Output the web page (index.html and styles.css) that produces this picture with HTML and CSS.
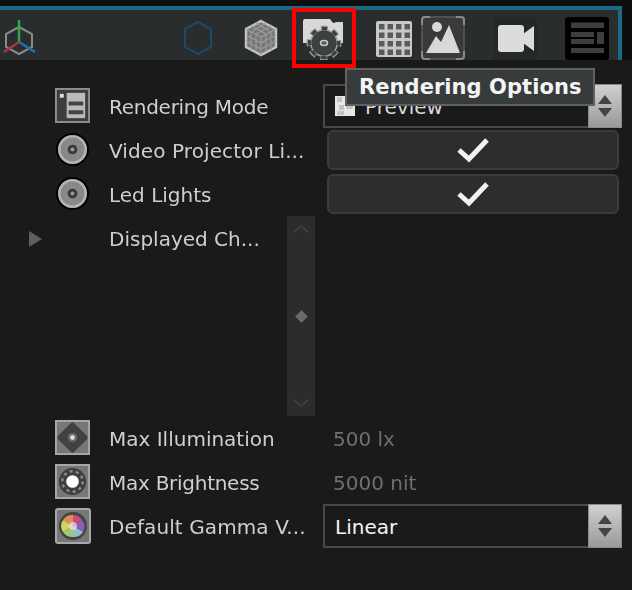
FILE: index.html
```html
<!DOCTYPE html>
<html lang="en">
<head>
<meta charset="utf-8">
<title>Rendering Options</title>
<link rel="stylesheet" href="styles.css">
</head>
<body>
<div class="app">
  <div class="panel-frame">
    <header class="toolbar">
      <svg class="tool tool-axis" viewBox="0 0 36 50" width="36" height="50"><path d="M18 17 31 24V37L18 44 5 37V24Z" fill="none" stroke="#8a8a8a" stroke-width="2"/><path d="M18 32V10" stroke="#2fa84a" stroke-width="2.5"/><path d="M18 32 3 42" stroke="#b5303f" stroke-width="2.5"/><path d="M18 32 34 42" stroke="#2273ad" stroke-width="2.5"/></svg>
      <svg class="tool tool-hex" viewBox="0 0 32 50" width="32" height="50"><path d="M16 12 29 19V37L16 44 3 37V19Z" fill="none" stroke="#1d4a69" stroke-width="2"/></svg>
      <svg class="tool tool-cube" viewBox="0 -9 36 50" width="36" height="50"><path d="M18 2 33 10V28L18 36 3 28V10Z" fill="#777" stroke="#c4c4c4" stroke-width="2.5"/><path d="M3 10 18 18 33 10M18 18V36M8 13V31M13 15V33M23 15V33M28 13V31M3 16 18 24 33 16M3 22 18 30 33 22M8 7 23 15M13 4 28 13M28 7 13 15M23 4 8 13" fill="none" stroke="#9a9a9a" stroke-width="1.2"/></svg>
      <svg class="tool tool-gear" viewBox="0 0 40 50" width="40" height="50">
        <path d="M0 11Q0 9 2 9H27L30 13 34 12H40V33H0Z" fill="#d8d8d8"/>
        <circle cx="21" cy="33" r="14" fill="#a0a0a0"/>
        <circle cx="21" cy="33" r="15.500" fill="none" stroke="#a0a0a0" stroke-width="4" stroke-dasharray="7 5.170" stroke-dashoffset="3.500"/>
        <circle cx="21" cy="33" r="12.500" fill="#3c4040"/>
        <circle cx="21" cy="33" r="14.500" fill="none" stroke="#3c4040" stroke-width="3.500" stroke-dasharray="5.500 5.890" stroke-dashoffset="2.750"/>
        <ellipse cx="21" cy="33" rx="3.500" ry="2.500" fill="#555" stroke="#c8c8c8" stroke-width="1.500"/>
      </svg>
      <svg class="tool tool-grid" viewBox="0 0 38 50" width="38" height="50"><rect x="1" y="11" width="36" height="36" rx="2" fill="#c8c8c8"/><path d="M4 14h5.500v5.500h-5.500zM12.500 14h5.500v5.500h-5.500zM21 14h5.500v5.500h-5.500zM29.500 14h5.500v5.500h-5.500zM4 22.500h5.500v5.500h-5.500zM12.500 22.500h5.500v5.500h-5.500zM21 22.500h5.500v5.500h-5.500zM29.500 22.500h5.500v5.500h-5.500zM4 31h5.500v5.500h-5.500zM12.500 31h5.500v5.500h-5.500zM21 31h5.500v5.500h-5.500zM29.500 31h5.500v5.500h-5.500zM4 39.500h5.500v5.500h-5.500zM12.500 39.500h5.500v5.500h-5.500zM21 39.500h5.500v5.500h-5.500zM29.500 39.500h5.500v5.500h-5.500z" fill="#5a5a5a"/></svg>
      <svg class="tool tool-image" viewBox="0 0 44 50" width="44" height="50">
        <rect x="1" y="7" width="42" height="42" rx="3" fill="#3a3a3a" stroke="#505050" stroke-width="2"/>
        <path d="M1 15V10Q1 7 4 7H9M35 7H40Q43 7 43 10V15M43 41V46Q43 49 40 49H35M9 49H4Q1 49 1 46V41" fill="none" stroke="#8a8a8a" stroke-width="2"/>
        <circle cx="16" cy="17" r="5" fill="#d8d8d8"/>
        <path d="M5 43 15 26 20 32 28 15 39 43Z" fill="#d8d8d8"/>
      </svg>
      <svg class="tool tool-camera" viewBox="0 0 44 50" width="44" height="50"><rect x="0" y="7" width="44" height="43" rx="4" fill="#252828"/><rect x="5" y="15" width="26" height="27" rx="3" fill="#dcdcdc"/><path d="M30 24 41 16V41L30 33Z" fill="#dcdcdc"/></svg>
      <svg class="tool tool-layout" viewBox="0 0 44 50" width="44" height="50"><rect x="0" y="7" width="44" height="43" rx="3" fill="#000"/><path d="M6 12.500H39V18H6ZM6 22H29V27H6ZM6 29H29V34H6ZM32 22H39V34H32ZM6 38H39V43H6Z" fill="#3e3e3e"/></svg>
    </header>
    <main class="rows">
      <div class="row">
        <span class="disclosure"></span>
        <svg class="row-icon" viewBox="0 0 36 36" width="35" height="35"><rect x="1" y="1" width="34" height="34" fill="#3d3d3d" stroke="#8e8e8e" stroke-width="2"/><rect x="5" y="6" width="4" height="4" fill="#ddd"/><rect x="12" y="5" width="19" height="26" fill="#bbb"/><path d="M14 14H29V18H14ZM14 23H29V27H14Z" fill="#444"/></svg>
        <span class="label label-tight">Rendering Mode</span>
        <div class="select">
          <svg class="select-swatch" viewBox="0 0 20 20" width="20" height="20"><rect width="20" height="20" fill="#e8e8e8"/><path d="M2 1H7V6H2ZM4 9H9V14H4ZM11 10H18V13H11ZM2 15H9V19H2Z" fill="#c4c4c4"/></svg>
          <span class="select-text">Preview</span>
          <span class="select-arrows"><i class="up"></i><i class="down"></i></span>
        </div>
      </div>
      <div class="row">
        <span class="disclosure"></span>
        <svg class="row-icon" viewBox="0 0 36 36" width="35" height="35"><circle cx="18" cy="18" r="17" fill="#000"/><circle cx="18" cy="18" r="15" fill="#888"/><circle cx="18" cy="18" r="13.500" fill="none" stroke="#b4b4b4" stroke-width="2.500"/><circle cx="18" cy="18" r="5" fill="#3a3a3a"/><circle cx="18" cy="18" r="2" fill="#999"/></svg>
        <span class="label label-wide">Video Projector Li...</span>
        <button class="check-button" type="button"><svg viewBox="0 0 34 28" width="34" height="28"><path d="M3 14 13 23 31 4" fill="none" stroke="#f2f2f2" stroke-width="5"/></svg></button>
      </div>
      <div class="row">
        <span class="disclosure"></span>
        <svg class="row-icon" viewBox="0 0 36 36" width="35" height="35"><circle cx="18" cy="18" r="17" fill="#000"/><circle cx="18" cy="18" r="15" fill="#888"/><circle cx="18" cy="18" r="13.500" fill="none" stroke="#b4b4b4" stroke-width="2.500"/><circle cx="18" cy="18" r="5" fill="#3a3a3a"/><circle cx="18" cy="18" r="2" fill="#999"/></svg>
        <span class="label">Led Lights</span>
        <button class="check-button" type="button"><svg viewBox="0 0 34 28" width="34" height="28"><path d="M3 14 13 23 31 4" fill="none" stroke="#f2f2f2" stroke-width="5"/></svg></button>
      </div>
      <div class="row row-tall">
        <span class="disclosure disclosure-closed"></span>
        <span class="row-icon-empty"></span>
        <span class="label">Displayed Ch...</span>
        <div class="scrollbar">
          <svg viewBox="0 0 16 10" width="16" height="10"><path d="M1 8 8 2 15 8" fill="none" stroke="#404040" stroke-width="2"/></svg>
          <span class="scroll-grip"></span>
          <svg viewBox="0 0 16 10" width="16" height="10"><path d="M1 2 8 8 15 2" fill="none" stroke="#404040" stroke-width="2"/></svg>
        </div>
      </div>
      <div class="row">
        <span class="disclosure"></span>
        <svg class="row-icon" viewBox="0 0 36 36" width="35" height="35"><rect x="1" y="1" width="34" height="34" fill="#777" stroke="#a8a8a8" stroke-width="2"/><path d="M18 5 31 18 18 31 5 18Z" fill="#414141" stroke="#414141" stroke-width="5" stroke-linejoin="round"/><circle cx="18" cy="18" r="5" fill="#666"/><circle cx="18" cy="18" r="2.500" fill="#ddd"/></svg>
        <span class="label">Max Illumination</span>
        <span class="value">500 lx</span>
      </div>
      <div class="row">
        <span class="disclosure"></span>
        <svg class="row-icon" viewBox="0 0 36 36" width="35" height="35"><rect x="1" y="1" width="34" height="34" fill="#777" stroke="#a8a8a8" stroke-width="2"/><circle cx="18" cy="18" r="14" fill="#3f3f3f"/><circle cx="18" cy="18" r="10.500" fill="none" stroke="#8c8c8c" stroke-width="2.500" stroke-dasharray="3 3.600"/><circle cx="18" cy="18" r="6.500" fill="#fff"/></svg>
        <span class="label label-tight">Max Brightness</span>
        <span class="value">5000 nit</span>
      </div>
      <div class="row">
        <span class="disclosure"></span>
        <svg class="row-icon row-icon-gamma" viewBox="0 0 36 36" width="36" height="36"><rect x="1" y="1" width="34" height="34" rx="2" fill="#777" stroke="#a8a8a8" stroke-width="2"/><circle cx="18" cy="18" r="14" fill="#444"/><path d="M18 18V7A11 11 0 0 1 27 12Z" fill="#d04a7a"/><path d="M18 18 27 12A11 11 0 0 1 28 24Z" fill="#8a5fb8"/><path d="M18 18 28 24A11 11 0 0 1 18 29Z" fill="#8fc0c8"/><path d="M18 18V29A11 11 0 0 1 8 24Z" fill="#a0c870"/><path d="M18 18 8 24A11 11 0 0 1 8 12Z" fill="#d8d060"/><path d="M18 18 8 12A11 11 0 0 1 18 7Z" fill="#e09050"/><circle cx="18" cy="18" r="4" fill="#e8e8e8" opacity=".7"/></svg>
        <span class="label label-wide">Default Gamma V...</span>
        <div class="select">
          <span class="select-text select-text-plain">Linear</span>
          <span class="select-arrows"><i class="up"></i><i class="down"></i></span>
        </div>
      </div>
    </main>
  </div>
  <div class="highlight-box"></div>
  <div class="tooltip">Rendering Options</div>
</div>
</body>
</html>
```

FILE: styles.css
```css
* { box-sizing: border-box; }
html, body { margin: 0; padding: 0; }
body {
  width: 632px;
  height: 590px;
  overflow: hidden;
  background: #1a1a1a;
  font-family: "DejaVu Sans", sans-serif;
}
.app {
  position: relative;
  width: 632px;
  height: 590px;
  padding-top: 6px;
  background: linear-gradient(#0d0f0f 0 60px, #1a1a1a 60px);
}
.panel-frame { width: 622px; }
.toolbar {
  display: flex;
  align-items: flex-start;
  height: 54px;
  border-top: 4px solid #1b6a85;
  border-right: 4px solid #1b6a85;
  background: #2a2d2d;
  padding-left: 1px;
}
.tool { flex: none; filter: blur(.6px); }
.tool-hex { margin-left: 145px; }
.tool-cube { margin-left: 29px; }
.tool-gear { margin-left: 24px; }
.tool-grid { margin-left: 32px; }
.tool-image { margin-left: 8px; }
.tool-camera { margin-left: 28px; }
.tool-layout { margin-left: 28px; }
.rows { padding-top: 25px; background: #1a1a1a; }
.row {
  display: flex;
  align-items: center;
  height: 44px;
  color: #cfcfcf;
  font-size: 20px;
}
.row-tall { height: 200px; align-items: flex-start; }
.row-tall .label { margin-top: 10px; }
.disclosure { flex: none; width: 55px; }
.disclosure-closed { position: relative; height: 44px; }
.disclosure-closed::before {
  content: "";
  position: absolute;
  left: 29px;
  top: 14px;
  border-left: 13px solid #5e5e5e;
  border-top: 8px solid transparent;
  border-bottom: 8px solid transparent;
  filter: blur(.4px);
}
.row-icon {
  flex: none;
  width: 35px;
  height: 35px;
  margin-top: -4px;
  margin-right: 1px;
  filter: blur(.5px);
}
.row-icon-gamma { width: 36px; height: 36px; margin-top: -2px; margin-right: 0; }
.row-icon-empty { flex: none; width: 36px; }
.label {
  flex: none;
  width: 232px;
  padding-left: 18px;
  white-space: nowrap;
  overflow: hidden;
  filter: blur(.25px);
}
.label-tight { letter-spacing: -.27px; }
.label-wide { letter-spacing: .1px; }
.value { color: #6f6f6f; margin-left: 10px; filter: blur(.25px); }
.select {
  display: flex;
  align-items: center;
  width: 299px;
  height: 44px;
  margin-top: -2px;
  border: 2px solid #464946;
  border-right: 0;
  background: #1a1a1a;
}
.select-swatch {
  flex: none;
  width: 20px;
  height: 20px;
  margin-left: 10px;
  filter: blur(.5px);
}
.select-text {
  flex: 1;
  margin-top: 2px;
  margin-left: 10px;
  color: #d8d8d8;
}
.select-text-plain { margin-left: 10px; color: #f4f4f4; }
.select-arrows {
  flex: none;
  display: flex;
  flex-direction: column;
  align-items: center;
  justify-content: center;
  gap: 4px;
  width: 34px;
  height: 44px;
  margin-top: -2px;
  margin-bottom: -2px;
  background: linear-gradient(#d0d0d0, #9a9a9a);
  border: 1px solid #8a8a8a;
}
.select-arrows i { display: block; width: 0; height: 0; border-left: 7px solid transparent; border-right: 7px solid transparent; }
.select-arrows .up { border-bottom: 9px solid #444; }
.select-arrows .down { border-top: 9px solid #444; }
.check-button {
  display: flex;
  align-items: center;
  justify-content: center;
  width: 292px;
  height: 40px;
  margin-top: -2px;
  margin-left: 4px;
  padding: 0;
  background: #2d2d2d;
  border: 2px solid #3b3b3b;
  border-radius: 6px;
}
.check-button svg { filter: blur(.4px); }
.scrollbar {
  flex: none;
  display: flex;
  flex-direction: column;
  align-items: center;
  justify-content: space-between;
  width: 28px;
  height: 200px;
  margin-left: -36px;
  margin-top: -1px;
  padding: 8px 0;
  background: #2c2c2c;
}
.scroll-grip {
  display: block;
  width: 9px;
  height: 9px;
  background: #6a6a6a;
  transform: rotate(45deg);
  filter: blur(.5px);
}
.highlight-box {
  position: absolute;
  left: 292px;
  top: 8px;
  width: 64px;
  height: 60px;
  border: 4px solid #fe0000;
}
.tooltip {
  position: absolute;
  left: 345px;
  top: 68px;
  width: 250px;
  height: 38px;
  padding-left: 12px;
  line-height: 35px;
  letter-spacing: .06px;
  border: 2px solid #5f6261;
  background: #383b3b;
  color: #f4f4f4;
  font-size: 21px;
  font-weight: 700;
  white-space: nowrap;
}
```
